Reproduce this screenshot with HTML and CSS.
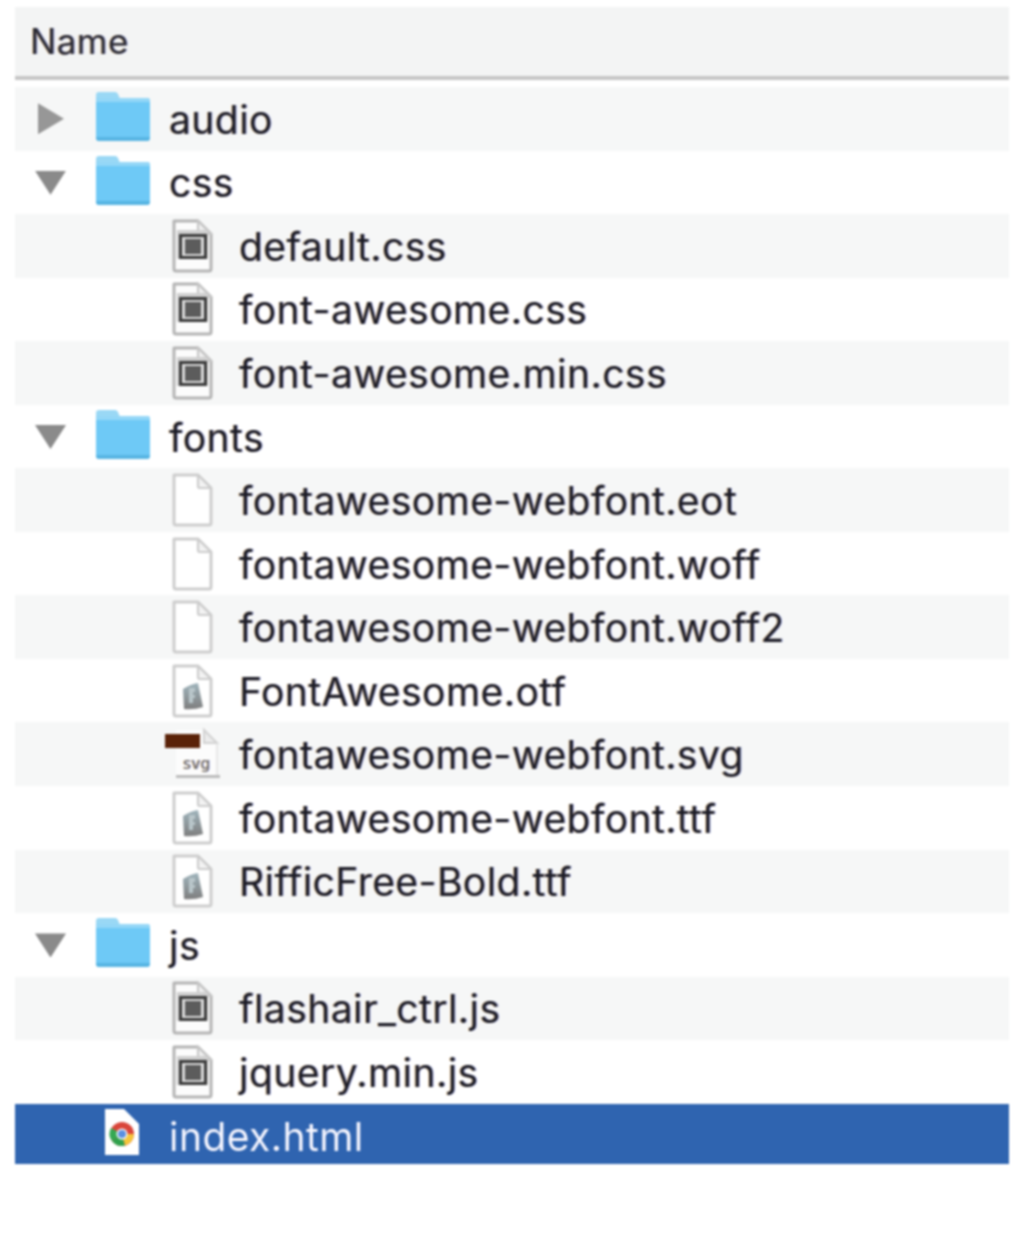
FILE: index.html
```html
<!DOCTYPE html>
<html lang="en">
<head>
<meta charset="utf-8">
<title>Project files</title>
<link rel="stylesheet" href="styles.css">
</head>
<body>
<svg class="defs" width="0" height="0" aria-hidden="true">
  <defs>
    <linearGradient id="blob" x1="0" y1="0" x2="0" y2="1">
      <stop offset="0" stop-color="#9fb4bc"/>
      <stop offset="1" stop-color="#7f7f7f"/>
    </linearGradient>
    <symbol id="folder" viewBox="0 0 54 50">
      <path d="M0 47V3q0-3 3-3h16q2 0 3 2l2 5H2z" fill="#9ad8f5"/>
      <path d="M0 9q0-3 3-3h48q3 0 3 3v37q0 3-3 3H3q-3 0-3-3z" fill="#6ec9f6"/>
      <path d="M0 9q0-3 3-3h48q3 0 3 3v1H0z" fill="#94d7f7"/>
      <path d="M0 45q0 4 3 4h48q3 0 3-4z" fill="#58b5e3"/>
    </symbol>
    <symbol id="page" viewBox="0 0 42 56">
      <path d="M3 3h24l13 13v35q0 2-2 2H5q-2 0-2-2z" fill="#fff" stroke="#cdcdcd" stroke-width="3" stroke-linejoin="round"/>
      <path d="M27 3v11q0 2 2 2h11z" fill="#f2f2f2" stroke="#cdcdcd" stroke-width="2.200" stroke-linejoin="round"/>
    </symbol>
    <symbol id="code" viewBox="0 0 42 56">
      <path d="M3 3h24l13 13v35q0 2-2 2H5q-2 0-2-2z" fill="#fcfcfc" stroke="#b4b4b4" stroke-width="3" stroke-linejoin="round"/>
      <path d="M27 3v11q0 2 2 2h11z" fill="#efefef" stroke="#c6c6c6" stroke-width="2"/>
      <rect x="6" y="12" width="31" height="29" fill="#cfcfcf"/>
      <rect x="9.500" y="17.500" width="25" height="22" fill="#dcdcdc" stroke="#3a3a3a" stroke-width="3"/>
      <rect x="14" y="21" width="16" height="15" fill="#5c5c5c"/>
    </symbol>
    <symbol id="font" viewBox="0 0 42 56">
      <path d="M3 3h24l13 13v35q0 2-2 2H5q-2 0-2-2z" fill="#fff" stroke="#cdcdcd" stroke-width="3" stroke-linejoin="round"/>
      <path d="M27 3v11q0 2 2 2h11z" fill="#f2f2f2" stroke="#cdcdcd" stroke-width="2.200" stroke-linejoin="round"/>
      <path d="M12 26q8-5 15-6l5 24q-9 3-19 2z" fill="url(#blob)"/>
      <path d="M18 25h6v4h-2v3h2v3h-2v5h-4z" fill="#b9c6ca"/>
    </symbol>
    <symbol id="svgfile" viewBox="0 0 56 54">
      <path d="M11 3h28l13 13v35H11z" fill="#fcfcfc"/>
      <path d="M39 3v13h13z" fill="#ececec" stroke="#d2d2d2" stroke-width="2"/>
      <path d="M52 16v32" stroke="#e2e2e2" stroke-width="1.500"/>
      <rect x="0" y="7" width="35" height="14" fill="#5a2208"/>
      <rect x="11" y="48" width="44" height="3" fill="#bcbcbc"/>
      <text x="18" y="42" class="svg-label">svg</text>
    </symbol>
    <symbol id="html" viewBox="0 0 36 48">
      <path d="M1 1h19l15 15v31H1z" fill="#fff"/>
      <circle cx="18" cy="26" r="12" fill="#d9453a"/>
      <path d="M18 26L8 33a12 12 0 0 1-1-13z" fill="#35a853"/>
      <path d="M18 26l-10 7a12 12 0 0 0 13 4.500z" fill="#2fa14c"/>
      <path d="M18 26h12a12 12 0 0 1-9 11.500z" fill="#f5c63a"/>
      <circle cx="18" cy="26" r="5.500" fill="#fff"/>
      <circle cx="18" cy="26" r="4" fill="#5a8fe0"/>
    </symbol>
  </defs>
</svg>

<main class="browser">
  <header class="head">Name</header>
  <div class="gap"></div>
  <ul class="list">
    <li class="row tint folder-row"><span class="tri tri-right"></span><svg class="ic-folder"><use href="#folder"/></svg><span class="name">audio</span></li>
    <li class="row folder-row"><span class="tri tri-down"></span><svg class="ic-folder"><use href="#folder"/></svg><span class="name">css</span></li>
    <li class="row tint file-row"><svg class="ic-file"><use href="#code"/></svg><span class="name">default.css</span></li>
    <li class="row file-row"><svg class="ic-file"><use href="#code"/></svg><span class="name">font-awesome.css</span></li>
    <li class="row tint file-row"><svg class="ic-file"><use href="#code"/></svg><span class="name">font-awesome.min.css</span></li>
    <li class="row folder-row"><span class="tri tri-down"></span><svg class="ic-folder"><use href="#folder"/></svg><span class="name">fonts</span></li>
    <li class="row tint file-row"><svg class="ic-file"><use href="#page"/></svg><span class="name">fontawesome-webfont.eot</span></li>
    <li class="row file-row"><svg class="ic-file"><use href="#page"/></svg><span class="name">fontawesome-webfont.woff</span></li>
    <li class="row tint file-row"><svg class="ic-file"><use href="#page"/></svg><span class="name">fontawesome-webfont.woff2</span></li>
    <li class="row file-row"><svg class="ic-file"><use href="#font"/></svg><span class="name">FontAwesome.otf</span></li>
    <li class="row tint svg-row"><svg class="ic-svg"><use href="#svgfile"/></svg><span class="name">fontawesome-webfont.svg</span></li>
    <li class="row file-row"><svg class="ic-file"><use href="#font"/></svg><span class="name">fontawesome-webfont.ttf</span></li>
    <li class="row tint file-row"><svg class="ic-file"><use href="#font"/></svg><span class="name">RifficFree-Bold.ttf</span></li>
    <li class="row folder-row"><span class="tri tri-down"></span><svg class="ic-folder"><use href="#folder"/></svg><span class="name">js</span></li>
    <li class="row tint file-row"><svg class="ic-file"><use href="#code"/></svg><span class="name">flashair_ctrl.js</span></li>
    <li class="row file-row"><svg class="ic-file"><use href="#code"/></svg><span class="name">jquery.min.js</span></li>
    <li class="row selected html-row"><svg class="ic-html"><use href="#html"/></svg><span class="name">index.html</span></li>
  </ul>
</main>
</body>
</html>
```
FILE: styles.css
```css
* { box-sizing: border-box; }
html, body { margin: 0; background: #fff; }
body {
  width: 1024px;
  height: 1252px;
  overflow: hidden;
  padding: 7px 15px 0;
  font-family: Inter, "Liberation Sans", Arial, sans-serif;
  color: #1c1c26;
}
.defs { position: absolute; }
.browser { width: 994px; filter: blur(0.8px); }
.head {
  height: 69px;
  padding: 14px 0 0 15px;
  background: #f3f4f4;
  font-size: 35px;
  letter-spacing: 0.4px;
  line-height: 40px;
  color: #2a2a34;
  text-shadow: -1px 0 0 rgba(240, 170, 70, .45), 1px 0 0 rgba(60, 80, 200, .45);
}
.gap {
  height: 11px;
  border-top: 4px solid #c6c6c6;
  background: #fff;
}
.list { list-style: none; margin: 0; padding: 0; }
.row {
  height: 63.56px;
  display: flex;
  align-items: center;
  font-size: 39px;
  letter-spacing: 0.45px;
  background: #fff;
  text-shadow: -1px 0 0 rgba(240, 170, 70, .45), 1px 0 0 rgba(60, 80, 200, .45);
}
.tint { background: #f6f7f7; }
.name { line-height: 46px; white-space: nowrap; position: relative; top: 1px; }
.folder-row .name { margin-left: 19px; }
.file-row .name { margin-left: 26px; }
.svg-row .name { margin-left: 18px; }
.folder-row { padding-left: 20px; }
.file-row { padding-left: 156px; }
.svg-row { padding-left: 150px; }
.tri { width: 34px; flex: none; display: block; margin-right: 27px; }
.tri-right { height: 31px; clip-path: polygon(3px 0, 29px 15.5px, 3px 31px); background: #979797; }
.tri-down { height: 24px; clip-path: polygon(0 0, 31px 0, 15.5px 24px); background: #8a8a8a; margin-top: 1px; }
.ic-folder { width: 54px; height: 50px; flex: none; margin-top: -3px; }
.ic-file { width: 42px; height: 56px; flex: none; filter: blur(0.6px); }
.ic-svg { width: 56px; height: 54px; flex: none; filter: blur(0.5px); }
.ic-html { width: 36px; height: 48px; flex: none; margin-top: -4px; }
.svg-label { font-family: "DejaVu Sans", sans-serif; font-size: 15px; fill: #666; }
.selected {
  height: 60px;
  background: #2f64b0;
  color: #f6f6ff;
  text-shadow: none;
}
.html-row { padding-left: 89px; }
.html-row .name { margin-left: 29px; top: 3px; }
```
